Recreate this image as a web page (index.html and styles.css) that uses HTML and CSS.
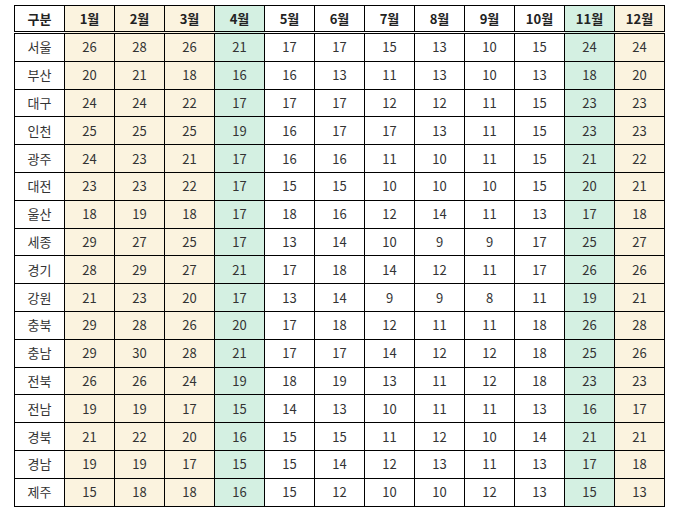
FILE: index.html
```html
<!DOCTYPE html>
<html lang="ko">
<head>
<meta charset="utf-8">
<link rel="stylesheet" href="styles.css">
</head>
<body>
<table class="grid">
<colgroup>
<col class="c-plain">
<col class="c-beige"><col class="c-beige"><col class="c-beige">
<col class="c-mint">
<col class="c-plain"><col class="c-plain"><col class="c-plain"><col class="c-plain"><col class="c-plain"><col class="c-plain">
<col class="c-mint">
<col class="c-beige">
</colgroup>
<thead>
<tr><th>구분</th><th>1월</th><th>2월</th><th>3월</th><th>4월</th><th>5월</th><th>6월</th><th>7월</th><th>8월</th><th>9월</th><th>10월</th><th>11월</th><th>12월</th></tr>
</thead>
<tbody>
<tr><td>서울</td><td>26</td><td>28</td><td>26</td><td>21</td><td>17</td><td>17</td><td>15</td><td>13</td><td>10</td><td>15</td><td>24</td><td>24</td></tr>
<tr><td>부산</td><td>20</td><td>21</td><td>18</td><td>16</td><td>16</td><td>13</td><td>11</td><td>13</td><td>10</td><td>13</td><td>18</td><td>20</td></tr>
<tr><td>대구</td><td>24</td><td>24</td><td>22</td><td>17</td><td>17</td><td>17</td><td>12</td><td>12</td><td>11</td><td>15</td><td>23</td><td>23</td></tr>
<tr><td>인천</td><td>25</td><td>25</td><td>25</td><td>19</td><td>16</td><td>17</td><td>17</td><td>13</td><td>11</td><td>15</td><td>23</td><td>23</td></tr>
<tr><td>광주</td><td>24</td><td>23</td><td>21</td><td>17</td><td>16</td><td>16</td><td>11</td><td>10</td><td>11</td><td>15</td><td>21</td><td>22</td></tr>
<tr><td>대전</td><td>23</td><td>23</td><td>22</td><td>17</td><td>15</td><td>15</td><td>10</td><td>10</td><td>10</td><td>15</td><td>20</td><td>21</td></tr>
<tr><td>울산</td><td>18</td><td>19</td><td>18</td><td>17</td><td>18</td><td>16</td><td>12</td><td>14</td><td>11</td><td>13</td><td>17</td><td>18</td></tr>
<tr><td>세종</td><td>29</td><td>27</td><td>25</td><td>17</td><td>13</td><td>14</td><td>10</td><td>9</td><td>9</td><td>17</td><td>25</td><td>27</td></tr>
<tr><td>경기</td><td>28</td><td>29</td><td>27</td><td>21</td><td>17</td><td>18</td><td>14</td><td>12</td><td>11</td><td>17</td><td>26</td><td>26</td></tr>
<tr><td>강원</td><td>21</td><td>23</td><td>20</td><td>17</td><td>13</td><td>14</td><td>9</td><td>9</td><td>8</td><td>11</td><td>19</td><td>21</td></tr>
<tr><td>충북</td><td>29</td><td>28</td><td>26</td><td>20</td><td>17</td><td>18</td><td>12</td><td>11</td><td>11</td><td>18</td><td>26</td><td>28</td></tr>
<tr><td>충남</td><td>29</td><td>30</td><td>28</td><td>21</td><td>17</td><td>17</td><td>14</td><td>12</td><td>12</td><td>18</td><td>25</td><td>26</td></tr>
<tr><td>전북</td><td>26</td><td>26</td><td>24</td><td>19</td><td>18</td><td>19</td><td>13</td><td>11</td><td>12</td><td>18</td><td>23</td><td>23</td></tr>
<tr><td>전남</td><td>19</td><td>19</td><td>17</td><td>15</td><td>14</td><td>13</td><td>10</td><td>11</td><td>11</td><td>13</td><td>16</td><td>17</td></tr>
<tr><td>경북</td><td>21</td><td>22</td><td>20</td><td>16</td><td>15</td><td>15</td><td>11</td><td>12</td><td>10</td><td>14</td><td>21</td><td>21</td></tr>
<tr><td>경남</td><td>19</td><td>19</td><td>17</td><td>15</td><td>15</td><td>14</td><td>12</td><td>13</td><td>11</td><td>13</td><td>17</td><td>18</td></tr>
<tr><td>제주</td><td>15</td><td>18</td><td>18</td><td>16</td><td>15</td><td>12</td><td>10</td><td>10</td><td>12</td><td>13</td><td>15</td><td>13</td></tr>
</tbody>
</table>
</body>
</html>
```
FILE: styles.css
```css
html, body {
  margin: 0;
  padding: 0;
  background: #ffffff;
}
body {
  font-family: "Noto Sans CJK KR", "Noto Sans", sans-serif;
  color: #333333;
}
.grid {
  margin: 5px 0 0 14px;
  border-collapse: collapse;
  table-layout: fixed;
  width: 650px;
  font-size: 13px;
}
.grid col { width: 50px; }
.c-plain { background: #ffffff; }
.c-beige { background: #fbf3df; }
.c-mint { background: #d4f0e2; }
.grid th, .grid td {
  border: 1px solid #000000;
  text-align: center;
  padding: 0;
  line-height: 16px;
}
.grid th {
  font-weight: bold;
  color: #222222;
  height: 25px;
  border-bottom: 3px double #000000;
}
.grid td {
  height: 26.8px;
}
```
